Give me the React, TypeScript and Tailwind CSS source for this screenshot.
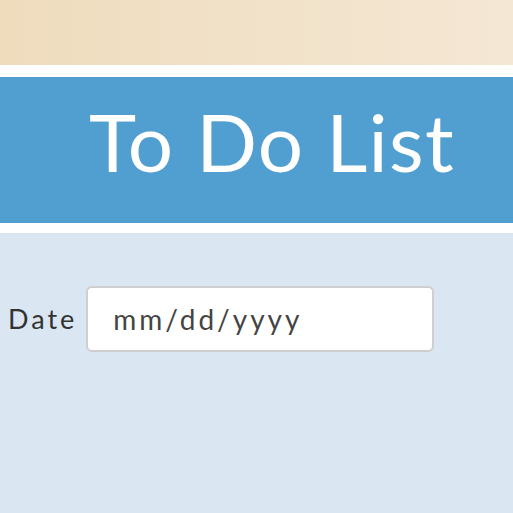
import React from 'react';

const App: React.FC = () => {
  return (
    <div className="min-h-screen w-full bg-[#dae6f1] font-['Lato','Noto_Sans',sans-serif]">
      {/* top band */}
      <div className="h-[65px] w-full bg-gradient-to-r from-[#efdcbd] to-[#f4e7d4] shadow-[0_2px_3px_rgba(160,130,90,0.35)]" />
      <div className="h-[12px] w-full bg-white" />
      {/* header */}
      <header className="flex h-[146px] w-full items-center bg-[#519fd0] pb-[18px] pl-[89px]">
        <h1 className="text-[80px] font-normal leading-none tracking-[1.3px] text-white">To Do List</h1>
      </header>
      <div className="h-[10px] w-full bg-white" />
      {/* form */}
      <section className="flex items-center gap-[9px] pl-[8px] pt-[53px]">
        <label className="text-[27px] tracking-[3px] text-[#333]">Date</label>
        <div className="flex h-[66px] w-[348px] items-center rounded-[6px] border-2 border-[#cfcfcf] bg-white pl-[25px] text-[28px] tracking-[3px] text-[#444]">
          mm/dd/yyyy
        </div>
      </section>
    </div>
  );
};

export default App;
